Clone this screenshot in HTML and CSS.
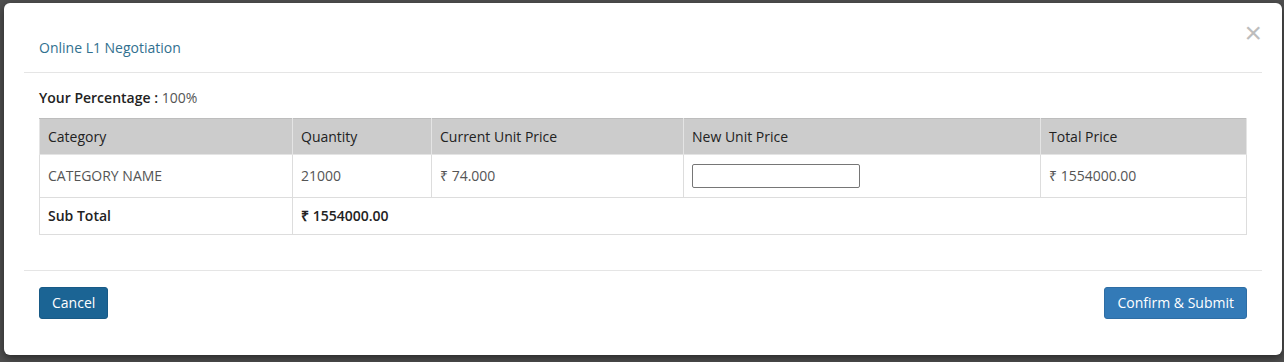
FILE: index.html
```html
<!DOCTYPE html>
<html lang="en">

<head>
  <meta charset="UTF-8">
  <meta name="viewport" content="width=device-width, initial-scale=1.0">
  <title>Online L1 Negotiation</title>
  <link rel="stylesheet" href="styles.css">
</head>

<body>
  <div class="backdrop">
    <div class="modal">
      <button class="close-btn" aria-label="Close">&times;</button>
      <div class="modal-header">
        <h4 class="modal-title">Online L1 Negotiation</h4>
      </div>
      <div class="modal-body">
        <p class="percentage"><b>Your Percentage :</b> 100%</p>
        <table class="price-table">
          <thead>
            <tr>
              <th class="col-cat">Category</th>
              <th class="col-qty">Quantity</th>
              <th class="col-cur">Current Unit Price</th>
              <th class="col-new">New Unit Price</th>
              <th>Total Price</th>
            </tr>
          </thead>
          <tbody>
            <tr class="item-row">
              <td>CATEGORY NAME</td>
              <td>21000</td>
              <td>&#8377; 74.000</td>
              <td><input type="text" class="price-input"></td>
              <td>&#8377; 1554000.00</td>
            </tr>
            <tr class="total-row">
              <td>Sub Total</td>
              <td colspan="4">&#8377; 1554000.00</td>
            </tr>
          </tbody>
        </table>
      </div>
      <div class="modal-footer">
        <button class="btn btn-cancel">Cancel</button>
        <button class="btn btn-submit">Confirm &amp; Submit</button>
      </div>
    </div>
  </div>
</body>

</html>
```

FILE: styles.css
```css
body {
  margin: 0;
  font-family: "Open Sans", Arial, sans-serif;
  font-size: 14px;
  color: #333;
  background-color: #4f4f4f;
}

.backdrop {
  height: 362px;
  padding: 3px 2px 0 4px;
  box-sizing: border-box;
}

.modal {
  position: relative;
  height: 352px;
  padding: 0 20px;
  background-color: #ffffff;
  border-radius: 6px;
  box-shadow: 0 3px 9px rgba(0, 0, 0, 0.5);
}

.close-btn {
  position: absolute;
  top: 15px;
  right: 20px;
  padding: 0;
  border: none;
  background: none;
  font-family: "Liberation Sans", Arial, sans-serif;
  font-size: 30px;
  font-weight: normal;
  line-height: 30px;
  color: #bdbdbd;
  cursor: pointer;
}

.modal-header {
  padding: 36px 15px 15px;
  border-bottom: 1px solid #e5e5e5;
}

.modal-title {
  margin: 0;
  font-size: 14px;
  font-weight: normal;
  line-height: 18px;
  color: #31708f;
}

.modal-body {
  padding: 16px 15px 35px;
}

.percentage {
  margin: 0 0 11px;
  line-height: 18px;
  color: #555;
}

.percentage b {
  font-weight: 600;
  color: #222;
}

.price-table {
  width: 100%;
  border-collapse: collapse;
  border: 1px solid #ddd;
}

.price-table th,
.price-table td {
  text-align: left;
  padding: 8px 8px;
  line-height: 18px;
  border: 1px solid #ddd;
}

.price-table th {
  background-color: #cccccc;
  font-weight: 500;
  color: #222;
  border-color: #e4e4e4;
  border-top-color: #bdbdbd;
  padding-top: 9px;
}

.col-cat { width: 236px; }
.col-qty { width: 122px; }
.col-cur { width: 235px; }
.col-new { width: 340px; }

.item-row td {
  color: #555;
  padding-top: 9px;
  padding-bottom: 9px;
}

.price-input {
  display: block;
  width: 168px;
  height: 24px;
  margin: 0;
  padding: 0 4px;
  box-sizing: border-box;
  border: 1px solid #767676;
  border-radius: 2px;
  font-family: inherit;
}

.total-row td {
  font-weight: 600;
  color: #222;
  padding-top: 9px;
  padding-bottom: 9px;
}

.modal-footer {
  display: flex;
  justify-content: space-between;
  padding: 16px 15px 36px;
  border-top: 1px solid #e5e5e5;
}

.btn {
  padding: 6px 12px;
  font-family: inherit;
  font-size: 14px;
  line-height: 18px;
  color: #ffffff;
  border: 1px solid transparent;
  border-radius: 3px;
  cursor: pointer;
}

.btn-cancel {
  background-color: #1b6494;
  border-color: #185a86;
}

.btn-submit {
  background-color: #337ab7;
  border-color: #2e6da4;
}

.btn:hover {
  opacity: 0.9;
}
```
